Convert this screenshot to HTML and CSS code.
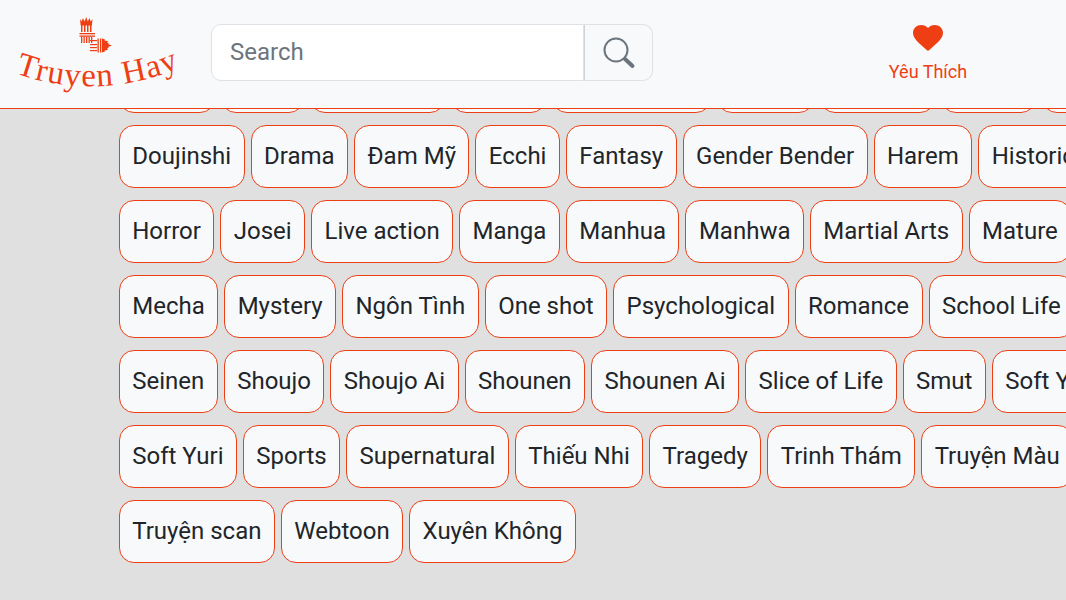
FILE: index.html
```html
<!DOCTYPE html>
<html lang="en">
<head>
    <meta charset="UTF-8">
    <meta name="viewport" content="width=device-width, initial-scale=1.0">
    <title>Truyen Hay</title>
    <link rel="stylesheet" href="styles.css">
</head>
<body>
    <div class="header">
        <a class="logo" href="#">
            <svg class="logo-svg" viewBox="0 0 190 100" width="190" height="100">
                <!-- crown -->
                <g class="logo-mark">
                    <path d="M80 19l1.600 2.500 1.400-3.500 1.600 3.500 1.600-4.500 1.600 4.500 1.600-3.500 1.400 3.500 1.700-2.500-.6 6.500H80.600z"/>
                    <rect x="81" y="24" width="1.500" height="8"/>
                    <rect x="84" y="24" width="1.500" height="8"/>
                    <rect x="87" y="24" width="1.500" height="8"/>
                    <rect x="90" y="24" width="1.500" height="8"/>
                    <rect x="79.500" y="33" width="15.500" height="1.300"/>
                    <rect x="79.500" y="35.500" width="15.500" height="1.300"/>
                    <rect x="81" y="37" width="1.300" height="6"/>
                    <rect x="83.500" y="37" width="1.300" height="6"/>
                    <rect x="86" y="37" width="1.300" height="6"/>
                    <rect x="88.500" y="37" width="1.300" height="6"/>
                    <rect x="91" y="37" width="1.300" height="6"/>
                    <rect x="90" y="40" width="7" height="1.200"/>
                    <rect x="90" y="44" width="7" height="1.200"/>
                    <rect x="90" y="47" width="7" height="1.200"/>
                    <rect x="90" y="50" width="7" height="1.200"/>
                    <rect x="97.500" y="38.500" width="1.300" height="14"/>
                    <rect x="100" y="38.500" width="1.300" height="14"/>
                    <path d="M102 38.500l3 1-.5 1 3.500.5-1 1.500 2 .5-1 1 4 1.500-4 1.500 1 1-2 .5 1 1.500-3.500.5.5 1-3 1z"/>
                </g>
                <path id="logo-arc" class="logo-arc" d="M15 73Q95 102 180 68"/>
                <text class="logo-text"><textPath class="logo-text" href="#logo-arc">Truyen Hay</textPath></text>
            </svg>
        </a>

        <div class="search-box">
            <input class="search-input" type="text" placeholder="Search">
            <button class="search-btn" type="button">
                <svg viewBox="0 0 34 34" width="34" height="34">
                    <circle cx="14" cy="14" r="11.500" class="search-ring"/>
                    <path d="M23 23l7.500 7" class="search-handle"/>
                </svg>
            </button>
        </div>

        <a class="favorite" href="#">
            <svg viewBox="2 3 20 18.350" width="30" height="26" preserveAspectRatio="none">
                <path d="M12 21.350l-1.450-1.320C5.400 15.360 2 12.280 2 8.500 2 5.420 4.420 3 7.500 3c1.740 0 3.410.81 4.500 2.090C13.090 3.810 14.760 3 16.500 3 19.580 3 22 5.420 22 8.500c0 3.780-3.400 6.860-8.550 11.540L12 21.350z"/>
            </svg>
            <span>Yêu Thích</span>
        </a>
    </div>

    <div class="genres">
        <div class="genre-row">
            <a class="genre">Action</a>
            <a class="genre">Adult</a>
            <a class="genre">Adventure</a>
            <a class="genre">Anime</a>
            <a class="genre">Chuyển Sinh</a>
            <a class="genre">Cổ Đại</a>
            <a class="genre">Comedy</a>
            <a class="genre">Comic</a>
            <a class="genre">Cooking</a>
        </div>
        <div class="genre-row">
            <a class="genre">Doujinshi</a>
            <a class="genre">Drama</a>
            <a class="genre">Đam Mỹ</a>
            <a class="genre">Ecchi</a>
            <a class="genre">Fantasy</a>
            <a class="genre">Gender Bender</a>
            <a class="genre">Harem</a>
            <a class="genre">Historical</a>
        </div>
        <div class="genre-row">
            <a class="genre">Horror</a>
            <a class="genre">Josei</a>
            <a class="genre">Live action</a>
            <a class="genre">Manga</a>
            <a class="genre">Manhua</a>
            <a class="genre">Manhwa</a>
            <a class="genre">Martial Arts</a>
            <a class="genre">Mature</a>
        </div>
        <div class="genre-row">
            <a class="genre">Mecha</a>
            <a class="genre">Mystery</a>
            <a class="genre">Ngôn Tình</a>
            <a class="genre">One shot</a>
            <a class="genre">Psychological</a>
            <a class="genre">Romance</a>
            <a class="genre">School Life</a>
        </div>
        <div class="genre-row">
            <a class="genre">Seinen</a>
            <a class="genre">Shoujo</a>
            <a class="genre">Shoujo Ai</a>
            <a class="genre">Shounen</a>
            <a class="genre">Shounen Ai</a>
            <a class="genre">Slice of Life</a>
            <a class="genre">Smut</a>
            <a class="genre">Soft Yaoi</a>
        </div>
        <div class="genre-row">
            <a class="genre">Soft Yuri</a>
            <a class="genre">Sports</a>
            <a class="genre">Supernatural</a>
            <a class="genre">Thiếu Nhi</a>
            <a class="genre">Tragedy</a>
            <a class="genre">Trinh Thám</a>
            <a class="genre">Truyện Màu</a>
        </div>
        <div class="genre-row">
            <a class="genre">Truyện scan</a>
            <a class="genre">Webtoon</a>
            <a class="genre">Xuyên Không</a>
        </div>
    </div>
</body>
</html>
```

FILE: styles.css
```css
* {
    margin: 0;
    padding: 0;
    box-sizing: border-box;
    font-family: Roboto, 'Liberation Sans', sans-serif;
}

html, body {
    height: 100%;
    overflow: hidden;
}

body {
    background-color: #e0e0e0;
    color: #212529;
}

.header {
    position: fixed;
    top: 0;
    left: 0;
    right: 0;
    z-index: 10;
    display: flex;
    align-items: flex-start;
    height: 109px;
    background-color: #f8f9fa;
    border-bottom: 1px solid #ee3f14;
}

.logo {
    display: block;
    flex: none;
    width: 211px;
}

.logo-svg {
    display: block;
}

.logo-mark {
    fill: #ee3f14;
}

.logo-arc {
    fill: none;
}

.logo-text {
    font-family: 'Liberation Serif', serif;
    font-size: 33px;
    letter-spacing: 1.200px;
    fill: #ee3f14;
}

.search-box {
    display: flex;
    flex: none;
    width: 442px;
    height: 57px;
    margin-top: 24px;
}

.search-input {
    flex: 1;
    min-width: 0;
    padding: 0 18px 2px;
    font-size: 24px;
    color: #212529;
    background-color: white;
    border: 1px solid #dee2e6;
    border-radius: 10px 0 0 10px;
    outline: none;
}

.search-input::placeholder {
    color: #6c757d;
    opacity: 1;
}

.search-btn {
    display: flex;
    align-items: center;
    justify-content: center;
    flex: none;
    width: 69px;
    background-color: #f8f9fa;
    border: 1px solid #dee2e6;
    border-left-color: #ced4da;
    border-radius: 0 10px 10px 0;
}

.search-ring {
    fill: none;
    stroke: #6c757d;
    stroke-width: 2;
}

.search-handle {
    fill: none;
    stroke: #6c757d;
    stroke-width: 4;
    stroke-linecap: round;
}

.favorite {
    display: flex;
    flex-direction: column;
    align-items: center;
    flex: none;
    width: 100px;
    margin-top: 25px;
    margin-left: 225px;
    color: #ee3f14;
    font-size: 18px;
    text-decoration: none;
}

.favorite svg {
    fill: #ee3f14;
    margin-bottom: 9.500px;
}

.genres {
    display: flex;
    flex-direction: column;
    gap: 12px;
    padding: 50px 0 0 118.800px;
}

.genre-row {
    display: flex;
    gap: 6px;
}

.genre {
    display: flex;
    align-items: center;
    flex: none;
    height: 63px;
    padding: 0 12.450px 2px;
    font-size: 24px;
    white-space: nowrap;
    background-color: #f8f9fa;
    border: 1px solid #ee3f14;
    border-radius: 15px;
}
```
